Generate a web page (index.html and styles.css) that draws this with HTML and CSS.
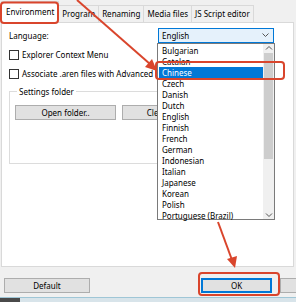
FILE: index.html
```html
<!DOCTYPE html>
<html lang="en">
<head>
    <meta charset="UTF-8">
    <title>Settings</title>
    <link rel="stylesheet" href="styles.css">
</head>
<body>
    <div class="dialog">
        <!-- Tab strip -->
        <div class="tabs">
            <div class="tab active">Environment</div>
            <div class="tab">Program</div>
            <div class="tab">Renaming</div>
            <div class="tab">Media files</div>
            <div class="tab">JS Script editor</div>
        </div>

        <!-- Environment page -->
        <div class="panel">
            <div class="row-language">
                <span>Language:</span>
                <div class="combo">
                    <span>English</span>
                    <svg class="chevron" width="7" height="4" viewBox="0 0 7 4"><path d="M0.5 0.5 L3.5 3.5 L6.5 0.5" fill="none" stroke="#555" stroke-width="1"/></svg>
                </div>
            </div>

            <label class="check"><span class="box"></span>Explorer Context Menu</label>
            <label class="check"><span class="box"></span>Associate .aren files with Advanced Renamer</label>

            <fieldset class="group">
                <legend>Settings folder</legend>
                <div class="group-buttons">
                    <button class="btn wide">Open folder..</button>
                    <button class="btn wide">Clear settings</button>
                </div>
            </fieldset>

            <!-- Open language list -->
            <div class="droplist">
                <div class="items">
                    <div class="item">Bulgarian</div>
                    <div class="item">Catalan</div>
                    <div class="item selected">Chinese</div>
                    <div class="item">Czech</div>
                    <div class="item">Danish</div>
                    <div class="item">Dutch</div>
                    <div class="item">English</div>
                    <div class="item">Finnish</div>
                    <div class="item">French</div>
                    <div class="item">German</div>
                    <div class="item">Indonesian</div>
                    <div class="item">Italian</div>
                    <div class="item">Japanese</div>
                    <div class="item">Korean</div>
                    <div class="item">Polish</div>
                    <div class="item">Portuguese (Brazil)</div>
                </div>
                <div class="scrollbar">
                    <svg width="10" height="8" viewBox="0 0 10 8"><path d="M2 5.5 L5 2.5 L8 5.5" fill="none" stroke="#555" stroke-width="1"/></svg>
                    <div class="thumb"></div>
                    <div class="track"></div>
                    <svg width="10" height="8" viewBox="0 0 10 8"><path d="M2 2.5 L5 5.5 L8 2.5" fill="none" stroke="#555" stroke-width="1"/></svg>
                </div>
            </div>
        </div>

        <!-- Dialog buttons -->
        <div class="footer">
            <button class="btn">Default</button>
            <div class="footer-right">
                <button class="btn ok">OK</button>
                <button class="btn" aria-label="Cancel"></button>
            </div>
        </div>
        <div class="taskbar"></div>

        <!-- Red tutorial marks -->
        <svg class="marks" width="296" height="302" viewBox="0 0 296 302">
            <g fill="none" stroke="#d9452c" stroke-width="2">
                <rect x="1" y="2.5" width="57" height="20.5" rx="3"/>
                <rect x="156" y="62" width="128" height="17" rx="3"/>
                <rect x="199" y="273" width="80" height="22" rx="3"/>
                <path d="M77 0 L150 64"/>
                <path d="M218 222 L232 260"/>
            </g>
            <g fill="#d9452c">
                <path d="M157 71 L145 67 L152 59 Z"/>
                <path d="M235 268 L227 259 L237 256 Z"/>
            </g>
        </svg>
    </div>
</body>
</html>
```

FILE: styles.css
```css
/* Windows-style settings dialog */
body {
    margin: 0;
    background: #f0f0f0;
    font-family: "Noto Sans", "Open Sans", sans-serif;
    font-size: 8px;
    color: #000;
}

.dialog {
    position: relative;
    width: 296px;
    height: 302px;
    overflow: hidden;
}

.tabs {
    display: flex;
    align-items: flex-end;
    height: 22px;
    padding-left: 2px;
}

.tab {
    height: 17px;
    line-height: 16px;
    padding: 0 3px;
    border: 1px solid #d9d9d9;
    border-bottom: none;
    margin-left: -1px;
    background: #f0f0f0;
    box-sizing: border-box;
    white-space: nowrap;
}

.tab.active {
    height: 22px;
    line-height: 19px;
    background: #fff;
    padding: 0 4px;
    position: relative;
    z-index: 1;
    margin-bottom: -1px;
}

.panel {
    position: relative;
    background: #fff;
    border: 1px solid #d9d9d9;
    margin: 0 2px 0 1px;
    height: 245px;
    box-sizing: border-box;
    padding: 4px 7px 0 7px;
}

.row-language {
    display: flex;
    justify-content: space-between;
    align-items: center;
    height: 16px;
    padding-right: 12px;
}

.combo {
    width: 116px;
    height: 15px;
    border: 1px solid #0078d7;
    background: #e5f1fb;
    display: flex;
    align-items: center;
    justify-content: space-between;
    padding: 0 4px 0 3px;
    box-sizing: border-box;
}

.check {
    display: flex;
    align-items: center;
    gap: 3px;
    margin-top: 4px;
    height: 15px;
    white-space: nowrap;
}

.box {
    width: 8px;
    height: 8px;
    border: 1px solid #333;
    background: #fff;
}

.group {
    margin: 5px 0 0 0;
    width: 250px;
    height: 78px;
    border: 1px solid #dcdcdc;
    padding: 6px 5px;
    box-sizing: border-box;
}

.group legend {
    padding: 0 2px;
    margin-left: 2px;
}

.group-buttons {
    display: flex;
    gap: 6px;
    margin-top: 2px;
}

.btn {
    font: inherit;
    height: 15px;
    width: 86px;
    padding: 0;
    background: #e1e1e1;
    border: 1px solid #adadad;
    color: #000;
}

.btn.wide {
    width: 101px;
}

.btn.ok {
    width: 71px;
    border-color: #0078d7;
    box-shadow: inset 0 0 0 1px #0078d7;
}

.droplist {
    position: absolute;
    left: 155px;
    top: 20px;
    width: 118px;
    height: 177px;
    background: #fff;
    border: 1px solid #7a7a7a;
    box-sizing: border-box;
    display: flex;
    z-index: 2;
}

.items {
    flex: 1;
    padding: 1px 0 0 1px;
}

.item {
    height: 11px;
    line-height: 11px;
    padding-left: 3px;
    white-space: nowrap;
}

.item.selected {
    background: #0078d7;
    color: #fff;
}

.scrollbar {
    width: 11px;
    background: #f0f0f0;
    display: flex;
    flex-direction: column;
    align-items: center;
}

.thumb {
    width: 9px;
    height: 106px;
    background: #cdcdcd;
    margin-top: 1px;
}

.track {
    flex: 1;
}

.footer {
    display: flex;
    justify-content: space-between;
    align-items: flex-start;
    height: 30px;
    padding: 11px 0 0 4px;
    box-sizing: border-box;
}

.footer-right {
    display: flex;
    gap: 8px;
    margin-right: -70px;
}

.taskbar {
    height: 5px;
    border-top: 1px solid #9fc6d6;
    background: linear-gradient(90deg, #4a4a4a 0 20px, #d8e4ea 20px);
}

.marks {
    position: absolute;
    left: 0;
    top: 0;
    z-index: 3;
}
```
